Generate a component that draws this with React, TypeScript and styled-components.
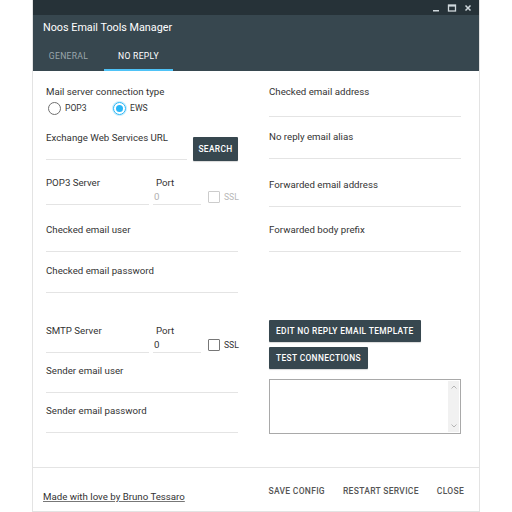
import React from "react";
import styled, { createGlobalStyle } from "styled-components";

const Global = createGlobalStyle`
  html, body { margin: 0; padding: 0; background: #fff; }
  body { font-family: Roboto, "Liberation Sans", Arial, sans-serif; }
  * { box-sizing: border-box; }
`;

const Page = styled.div`
  width: 512px;
  height: 512px;
  padding: 0 32px;
  background: #fff;
`;

const Window = styled.div`
  width: 448px;
  height: 512px;
  border: 1px solid #e3e3e3;
  border-top: none;
  display: flex;
  flex-direction: column;
  background: #fff;
`;

const TitleStrip = styled.div`
  height: 15px;
  background: #263238;
  display: flex;
  justify-content: flex-end;
  align-items: center;
  gap: 6px;
  padding-right: 6px;
`;

const Ctrl = styled.svg`
  width: 10px;
  height: 10px;
  color: #cfd8dc;
`;

const Header = styled.div`
  height: 56px;
  background: #37474f;
  display: flex;
  flex-direction: column;
`;

const Title = styled.div`
  color: #fff;
  font-size: 10.8px;
  line-height: 14px;
  padding: 6px 0 0 10px;
`;

const Tabs = styled.div`
  margin-top: auto;
  display: flex;
`;

const Tab = styled.div<{ $active?: boolean }>`
  width: ${(p) => (p.$active ? 69 : 71)}px;
  height: 30px;
  padding-top: 2px;
  display: flex;
  align-items: center;
  justify-content: center;
  font-size: 8.6px;
  letter-spacing: 0.3px;
  color: ${(p) => (p.$active ? "#ffffff" : "#9aa6ac")};
  border-bottom: 2px solid ${(p) => (p.$active ? "#4fc3f7" : "transparent")};
`;

const Content = styled.div`
  flex: 1;
  padding: 13px 18px 0 13px;
  display: grid;
  grid-template-columns: 192px 192px;
  column-gap: 31px;
  align-items: start;
`;

const Column = styled.div`
  display: flex;
  flex-direction: column;
`;

const Label = styled.div<{ $indent?: number }>`
  font-size: 9.7px;
  line-height: 14px;
  padding-top: 1px;
  color: #333;
  padding-left: ${(p) => p.$indent ?? 0}px;
  white-space: nowrap;
`;

const Field = styled.div<{ $mt?: number; $w?: number; $ml?: number }>`
  margin-top: ${(p) => p.$mt ?? 0}px;
  margin-left: ${(p) => p.$ml ?? 0}px;
  width: ${(p) => (p.$w ? `${p.$w}px` : "100%")};
  flex-shrink: 0;
  display: flex;
  flex-direction: column;
`;

const Input = styled.div<{ $muted?: boolean; $h?: number }>`
  height: ${(p) => p.$h ?? 15}px;
  border-bottom: 1px solid #e4e4e4;
  font-size: 9.7px;
  line-height: 14px;
  padding-left: 1px;
  color: ${(p) => (p.$muted ? "#b0b0b0" : "#333")};
`;

const RadioRow = styled.div`
  margin-top: 2px;
  padding-left: 2px;
  display: flex;
  height: 14px;
`;

const RadioItem = styled.div`
  width: 65px;
  display: flex;
  align-items: center;
  gap: 4px;
  font-size: 8.6px;
  color: #333;
`;

const RadioCircle = styled.div<{ $on?: boolean }>`
  width: 13px;
  height: 13px;
  border-radius: 50%;
  border: 1.5px solid ${(p) => (p.$on ? "#29b6f6" : "#6f6f6f")};
  display: flex;
  align-items: center;
  justify-content: center;
  box-shadow: ${(p) => (p.$on ? "0 0 0 1px rgba(41,182,246,0.25)" : "none")};
  &::after {
    content: "";
    width: 7px;
    height: 7px;
    border-radius: 50%;
    background: ${(p) => (p.$on ? "#29b6f6" : "transparent")};
  }
`;

const Row = styled.div<{ $mt?: number }>`
  margin-top: ${(p) => p.$mt ?? 0}px;
  display: flex;
  align-items: flex-end;
`;

const Button = styled.div<{ $h?: number }>`
  height: ${(p) => p.$h ?? 22}px;
  padding: 0 7px;
  background: #37474f;
  color: #fff;
  font-size: 8.4px;
  font-weight: 500;
  letter-spacing: 0.35px;
  display: inline-flex;
  align-items: center;
  border-radius: 1px;
  box-shadow: 0 1px 1px rgba(0, 0, 0, 0.15);
  white-space: nowrap;
`;

const SearchButton = styled(Button)`
  margin-left: 6px;
  margin-bottom: -1px;
  width: 45px;
  justify-content: center;
  padding: 0;
`;

const SslBox = styled.div<{ $disabled?: boolean }>`
  display: flex;
  align-items: center;
  gap: 4px;
  margin-left: 7px;
  margin-bottom: 2px;
  font-size: 8.6px;
  color: ${(p) => (p.$disabled ? "#b8b8b8" : "#333")};
`;

const Check = styled.div<{ $disabled?: boolean }>`
  width: 12px;
  height: 12px;
  border: 1.5px solid ${(p) => (p.$disabled ? "#cccccc" : "#777")};
  border-radius: 1px;
`;

const ButtonStack = styled.div<{ $mt?: number }>`
  margin-top: ${(p) => p.$mt ?? 0}px;
  display: flex;
  flex-direction: column;
  align-items: flex-start;
  gap: 5px;
`;

const LogBox = styled.div`
  margin-top: 10px;
  width: 192px;
  height: 55px;
  border: 1px solid #a9a9a9;
  display: flex;
`;

const LogText = styled.div`
  flex: 1;
`;

const ScrollTrack = styled.div`
  width: 11px;
  margin: 1px 1px 1px 0;
  background: #f1f1f1;
  display: flex;
  flex-direction: column;
  justify-content: space-between;
  align-items: center;
  padding: 4px 0;
`;

const Arrow = styled.svg`
  width: 6px;
  height: 4px;
  color: #b5b5b5;
`;

const Footer = styled.div`
  height: 44px;
  border-top: 1px solid #e4e4e4;
  display: flex;
  align-items: flex-start;
  padding: 11px 6px 0 10px;
`;

const Credit = styled.a`
  margin-top: 11px;
  font-size: 9.7px;
  line-height: 14px;
  color: #333;
  text-decoration: underline;
  text-decoration-color: #777;
`;

const FooterActions = styled.div`
  margin-left: auto;
  display: flex;
`;

const FlatButton = styled.div`
  height: 24px;
  padding: 0 9px;
  display: flex;
  align-items: center;
  font-size: 8.5px;
  font-weight: 500;
  letter-spacing: 0.3px;
  color: #555;
`;

type TFProps = { label: string; mt?: number; w?: number; ml?: number; value?: string; muted?: boolean; indent?: number; h?: number };

const TextField = ({ label, mt, w, ml, value, muted, indent, h }: TFProps) => (
  <Field $mt={mt} $w={w} $ml={ml}>
    <Label $indent={indent}>{label}</Label>
    <Input $muted={muted} $h={h}>{value}</Input>
  </Field>
);

export default function App() {
  return (
    <Page>
      <Global />
      <Window>
        <TitleStrip>
          <Ctrl viewBox="0 0 10 10"><rect x="2" y="7" width="6" height="1.5" fill="currentColor" /></Ctrl>
          <Ctrl viewBox="0 0 10 10"><rect x="1.5" y="2" width="7" height="6" fill="none" stroke="currentColor" strokeWidth="1.3" /><rect x="1.5" y="2" width="7" height="1.6" fill="currentColor" /></Ctrl>
          <Ctrl viewBox="0 0 10 10"><path d="M2.5 2.5 L7.5 7.5 M7.5 2.5 L2.5 7.5" stroke="currentColor" strokeWidth="1.5" /></Ctrl>
        </TitleStrip>
        <Header>
          <Title>Noos Email Tools Manager</Title>
          <Tabs>
            <Tab>GENERAL</Tab>
            <Tab $active>NO REPLY</Tab>
          </Tabs>
        </Header>
        <Content>
          <Column>
            <Label>Mail server connection type</Label>
            <RadioRow>
              <RadioItem><RadioCircle />POP3</RadioItem>
              <RadioItem><RadioCircle $on />EWS</RadioItem>
            </RadioRow>
            <Row $mt={15}>
              <TextField label="Exchange Web Services URL" w={141} />
              <SearchButton $h={24}>SEARCH</SearchButton>
            </Row>
            <Row $mt={15}>
              <TextField label="POP3 Server" w={103} />
              <TextField label="Port" w={48} ml={4} indent={3} value="0" muted />
              <SslBox $disabled><Check $disabled />SSL</SslBox>
            </Row>
            <TextField label="Checked email user" mt={17} />
            <TextField label="Checked email password" mt={11} />
            <Row $mt={30}>
              <TextField label="SMTP Server" w={103} />
              <TextField label="Port" w={48} ml={4} indent={3} value="0" />
              <SslBox><Check />SSL</SslBox>
            </Row>
            <TextField label="Sender email user" mt={10} />
            <TextField label="Sender email password" mt={10} />
          </Column>
          <Column>
            <TextField label="Checked email address" h={18} />
            <TextField label="No reply email alias" mt={12} />
            <TextField label="Forwarded email address" mt={18} />
            <TextField label="Forwarded body prefix" mt={15} />
            <ButtonStack $mt={68}>
              <Button>EDIT NO REPLY EMAIL TEMPLATE</Button>
              <Button>TEST CONNECTIONS</Button>
            </ButtonStack>
            <LogBox>
              <LogText />
              <ScrollTrack>
                <Arrow viewBox="0 0 6 4"><path d="M0.5 3.5 L3 1 L5.5 3.5" fill="none" stroke="currentColor" strokeWidth="1" /></Arrow>
                <Arrow viewBox="0 0 6 4"><path d="M0.5 0.5 L3 3 L5.5 0.5" fill="none" stroke="currentColor" strokeWidth="1" /></Arrow>
              </ScrollTrack>
            </LogBox>
          </Column>
        </Content>
        <Footer>
          <Credit>Made with love by Bruno Tessaro</Credit>
          <FooterActions>
            <FlatButton>SAVE CONFIG</FlatButton>
            <FlatButton>RESTART SERVICE</FlatButton>
            <FlatButton>CLOSE</FlatButton>
          </FooterActions>
        </Footer>
      </Window>
    </Page>
  );
}
